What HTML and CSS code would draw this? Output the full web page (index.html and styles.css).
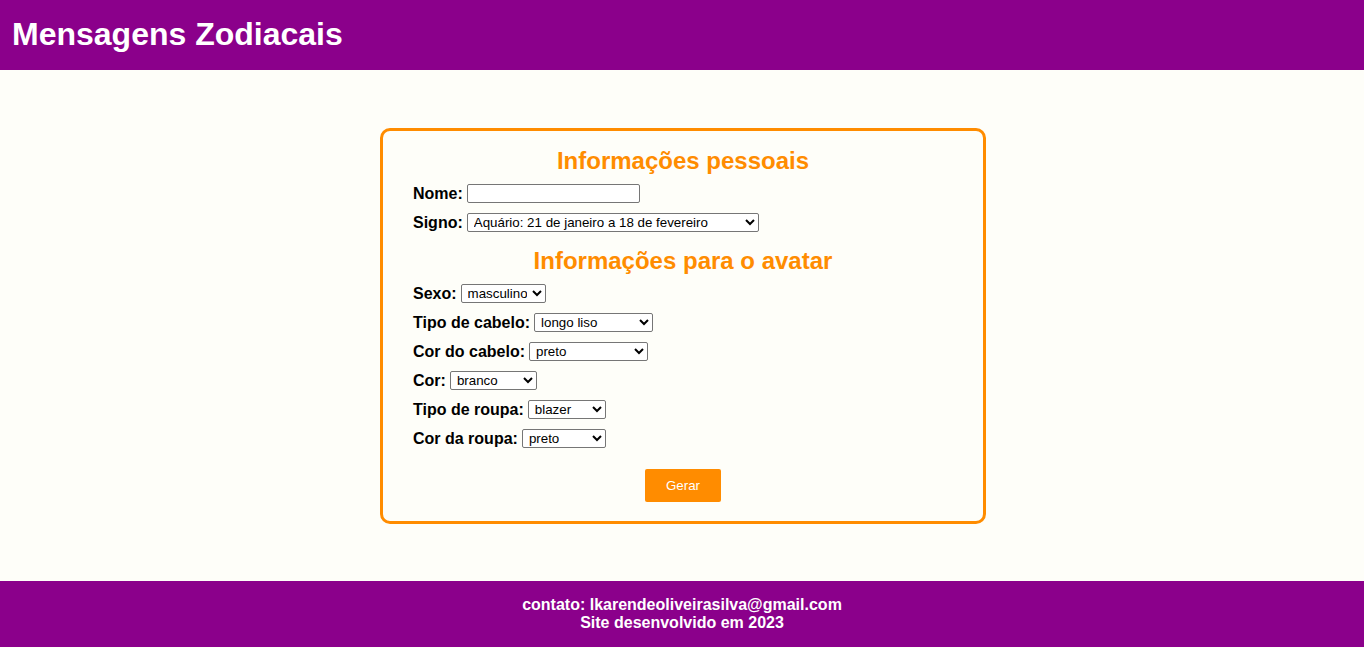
FILE: index.html
```html
<!DOCTYPE html>
<html lang="pt-BR">
<head>
<meta charset="utf-8">
<title>Mensagens Zodiacais</title>
<link rel="stylesheet" href="styles.css">
</head>
<body>
<header class="topo">
  <h1 class="titulo">Mensagens Zodiacais</h1>
</header>
<main class="conteudo">
  <form class="cartao">
    <h2 class="secao">Informações pessoais</h2>
    <div class="linha">
      <label class="rotulo" for="nome">Nome:</label>
      <input class="campo w-nome" id="nome" type="text">
    </div>
    <div class="linha">
      <label class="rotulo" for="signo">Signo:</label>
      <select class="campo w-signo" id="signo">
        <option>Aquário: 21 de janeiro a 18 de fevereiro</option>
      </select>
    </div>
    <h2 class="secao secao-avatar">Informações para o avatar</h2>
    <div class="linha">
      <label class="rotulo" for="sexo">Sexo:</label>
      <select class="campo w-sexo" id="sexo"><option>masculino</option><option>feminino</option></select>
    </div>
    <div class="linha">
      <label class="rotulo" for="cabelo">Tipo de cabelo:</label>
      <select class="campo w-cabelo" id="cabelo"><option>longo liso</option></select>
    </div>
    <div class="linha">
      <label class="rotulo" for="corcabelo">Cor do cabelo:</label>
      <select class="campo w-cabelo" id="corcabelo"><option>preto</option></select>
    </div>
    <div class="linha">
      <label class="rotulo" for="cor">Cor:</label>
      <select class="campo w-cor" id="cor"><option>branco</option></select>
    </div>
    <div class="linha">
      <label class="rotulo" for="roupa">Tipo de roupa:</label>
      <select class="campo w-roupa" id="roupa"><option>blazer</option></select>
    </div>
    <div class="linha">
      <label class="rotulo" for="corroupa">Cor da roupa:</label>
      <select class="campo w-corroupa" id="corroupa"><option>preto</option></select>
    </div>
    <div class="acoes">
      <button class="botao" type="button">Gerar</button>
    </div>
  </form>
</main>
<footer class="rodape">
  <p class="rodape-linha">contato: lkarendeoliveirasilva@gmail.com</p>
  <p class="rodape-linha">Site desenvolvido em 2023</p>
</footer>
</body>
</html>
```

FILE: styles.css
```css
html, body {
  margin: 0;
  padding: 0;
}
body {
  background: #fefef9;
  font-family: "Liberation Sans", Arial, sans-serif;
  color: #000;
}
.topo {
  background: #8b008b;
  height: 70px;
  box-sizing: border-box;
  padding: 16px 12px 0;
}
.titulo {
  margin: 0;
  color: #fff;
  font-size: 32px;
  font-weight: bold;
  line-height: 37px;
}
.conteudo {
  padding: 58px 0 57px 2px;
}
.cartao {
  box-sizing: border-box;
  width: 606px;
  margin: 0 auto;
  border: 3px solid #ff8c00;
  border-radius: 10px;
  padding: 16px 30px 19px;
  display: flex;
  flex-direction: column;
  gap: 10px;
}
.secao {
  margin: 0;
  color: #ff8c00;
  font-size: 24px;
  font-weight: bold;
  line-height: 27px;
  text-align: center;
}
.secao-avatar {
  margin-top: 5px;
}
.linha {
  display: flex;
  align-items: center;
  gap: 4px;
  height: 19px;
}
.rotulo {
  font-size: 16px;
  font-weight: bold;
  line-height: 18px;
}
.campo {
  box-sizing: border-box;
  height: 19px;
  font-family: "Liberation Sans", Arial, sans-serif;
  font-size: 13.33px;
  color: #000;
  background: #fff;
  border: 1px solid #767676;
  border-radius: 2px;
  padding: 0 2px;
  margin: 0;
}
.w-nome { width: 173px; }
.w-signo { width: 292px; }
.w-sexo { width: 85px; }
.w-cabelo { width: 119px; }
.w-cor { width: 87px; }
.w-roupa { width: 78px; }
.w-corroupa { width: 84px; }
.acoes {
  display: flex;
  justify-content: center;
  margin-top: 11px;
}
.botao {
  width: 76px;
  height: 33px;
  background: #ff8c00;
  color: #fff;
  border: none;
  border-radius: 2px;
  font-family: "Liberation Sans", Arial, sans-serif;
  font-size: 13.33px;
}
.rodape {
  background: #8b008b;
  color: #fff;
  text-align: center;
  padding: 15px 0;
}
.rodape-linha {
  margin: 0;
  font-size: 16px;
  font-weight: bold;
  line-height: 18px;
}
```
